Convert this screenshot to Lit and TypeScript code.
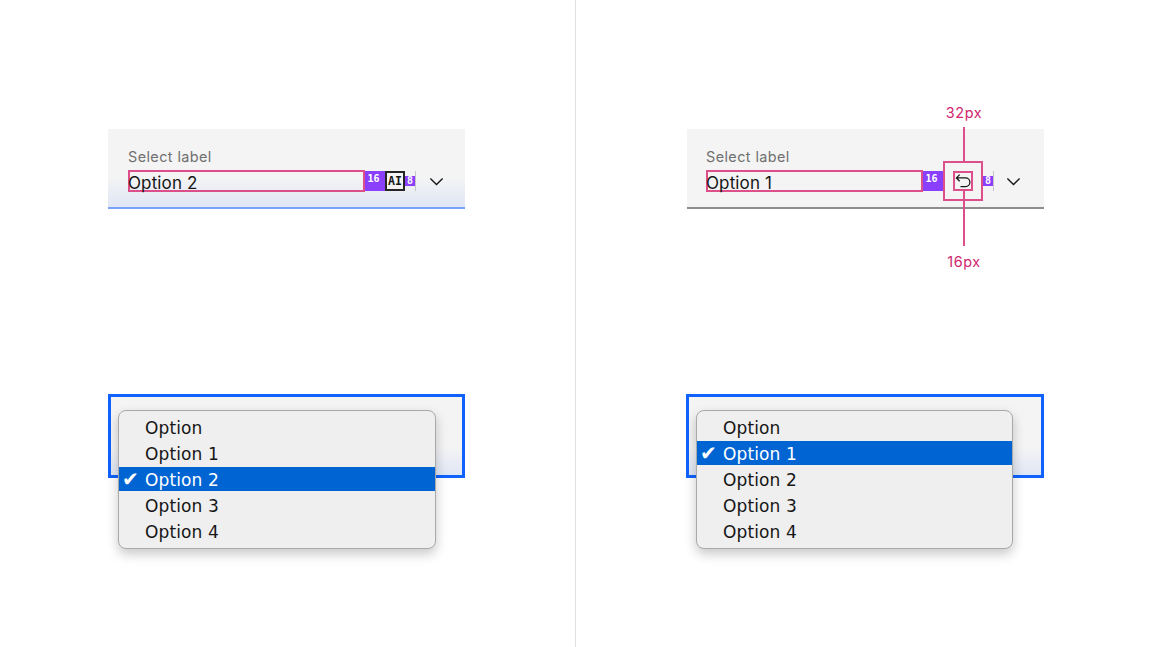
import { LitElement, html, css, nothing } from "lit";
import { customElement, property } from "lit/decorators.js";

const OPTIONS = ["Option", "Option 1", "Option 2", "Option 3", "Option 4"];

@customElement("spec-panel")
class SpecPanel extends LitElement {
  @property({ type: Number }) selected = 2;
  @property({ type: Boolean }) reset = false;

  static styles = css`
    :host { display: flex; flex-direction: column; width: 357px; position: relative; }
    .field {
      height: 80px; box-sizing: border-box; padding: 19px 0 0 20px;
      background: linear-gradient(to bottom, #f4f4f4 0, #f4f4f4 62%, #dfe6f5 100%);
      border-bottom: 2px solid #78a3f8;
      display: flex; flex-direction: column; position: relative;
    }
    .field.plain { background: #f4f4f4; border-bottom: 2px solid #8d8d8d; padding-left: 19px; }
    .label {
      font: 14.4px/18px "Inter", "Noto Sans", sans-serif; color: #6f6f6f; letter-spacing: .42px; height: 19px;
    }
    .row { display: flex; align-items: center; height: 22px; margin-top: 3px; }
    .value {
      box-sizing: border-box; height: 22px; width: 237px; border: 2px solid #dd4f8b;
      padding-top: 1px;
      font: 17px/20px "Inter", "Noto Sans", sans-serif; color: #161616; letter-spacing: .12px;
      white-space: nowrap; text-indent: -2px; flex: none;
    }
    .plain .value { width: 217px; }
    .s16, .s8 {
      box-sizing: border-box;
      background: #8a3ffc; color: #fff; font: 700 10px "DejaVu Sans Mono", monospace;
      display: flex; justify-content: center; flex: none;
    }
    .s16 { width: 20px; height: 20px; line-height: 16px; align-items: flex-start; padding-right: 3px; }
    .s8 { width: 10px; height: 10px; line-height: 10px; align-items: center; }
    .ai {
      box-sizing: border-box; width: 20px; height: 20px; border: 2px solid #262626; background: #f4f4f4;
      font: 700 11.5px "DejaVu Sans Mono", monospace; color: #161616;
      display: flex; align-items: center; justify-content: center; flex: none;
    }
    .divider { width: 1px; height: 20px; background: #c6c6c6; flex: none; }
    .chev { margin-left: 10px; width: 21px; height: 21px; fill: #161616; flex: none; }
    .plain .chev { margin-left: 9px; }
    .outer {
      box-sizing: border-box; width: 40px; height: 40px; border: 2px solid #dd4f8b;
      display: flex; align-items: center; justify-content: center; flex: none;
    }
    .inner {
      box-sizing: border-box; width: 20px; height: 20px; border: 2px solid #dd4f8b;
      display: flex; align-items: center; justify-content: center;
    }
    .inner svg { width: 20px; height: 20px; fill: #161616; flex: none; }
    .ann-line { position: absolute; left: 276px; width: 2px; background: #dd4f8b; }
    .ann-top { top: -2px; height: 35px; }
    .ann-bot { top: 61px; height: 56px; }
    .ann-text {
      position: absolute; left: 236px; width: 82px; text-align: center; color: #d02670;
      font: 14.4px/18px "Inter", "Noto Sans", sans-serif; letter-spacing: .6px;
    }
    .ann-t1 { top: -25px; }
    .ann-t2 { top: 124px; }
    .focus {
      box-sizing: border-box; height: 84px; margin-top: 185px; border: 3px solid #0f62fe;
      background: linear-gradient(to bottom, #f4f4f4 0, #f4f4f4 65%, #dfe6f5 100%); position: relative;
    }
    .plain + .focus { margin-left: -1px; }
    .menu {
      position: absolute; left: 7px; top: 13px; width: 318px; height: 139px; box-sizing: border-box;
      background: #efefef; border: 1px solid #a9a9a9; border-radius: 8px;
      box-shadow: 0 5px 12px rgba(0, 0, 0, .22);
      padding: 4px 0 0; display: flex; flex-direction: column; gap: 2px;
    }
    .plain + .focus .menu { width: 317px; }
    .opt {
      height: 24px; box-sizing: border-box; padding: 1px 0 0 26px; position: relative;
      font: 17px/24px "DejaVu Sans", sans-serif; color: #161616; letter-spacing: .12px;
    }
    .opt.sel { background: #0065d3; color: #fff; }
    .check { position: absolute; left: 3px; top: 0; font: 400 20px/24px "DejaVu Sans", sans-serif; }
  `;

  render() {
    const chevron = html`<svg class="chev" viewBox="0 0 32 32"><path d="M16 22L6 12 7.4 10.6 16 19.2 24.6 10.6 26 12z"/></svg>`;
    return html`
      <div class="field ${this.reset ? "plain" : ""}">
        <div class="label">Select label</div>
        <div class="row">
          <div class="value">Option ${this.selected}</div>
          <div class="s16">16</div>
          ${this.reset
            ? html`<div class="outer"><div class="inner"><svg viewBox="0 0 32 32"><path d="M20,10H7.8149l3.5874-3.5859L10,5,4,11,10,17l1.4023-1.4146L7.8179,12H20a6,6,0,0,1,0,12H12v2h8a8,8,0,0,0,0-16Z"/></svg></div></div>`
            : html`<div class="ai">AI</div>`}
          <div class="s8">8</div>
          <div class="divider"></div>
          ${chevron}
        </div>
        ${this.reset
          ? html`<div class="ann-line ann-top"></div><div class="ann-line ann-bot"></div>
              <div class="ann-text ann-t1">32px</div><div class="ann-text ann-t2">16px</div>`
          : nothing}
      </div>
      <div class="focus">
        <div class="menu">
          ${OPTIONS.map((o, i) => html`<div class="opt ${i === this.selected ? "sel" : ""}">
            ${i === this.selected ? html`<span class="check">✔</span>` : nothing}${o}</div>`)}
        </div>
      </div>
    `;
  }
}

@customElement("app-root")
class AppRoot extends LitElement {
  static styles = css`
    :host { display: grid; grid-template-columns: 575px 1px 1fr; width: 1152px; height: 647px; background: #fff; overflow: hidden; }
    .col { padding: 129px 0 0 108px; }
    .col.r { padding-left: 111px; }
    .rule { background: #e0e0e0; }
  `;
  render() {
    return html`
      <div class="col"><spec-panel .selected=${2}></spec-panel></div>
      <div class="rule"></div>
      <div class="col r"><spec-panel .selected=${1} .reset=${true}></spec-panel></div>
    `;
  }
}
